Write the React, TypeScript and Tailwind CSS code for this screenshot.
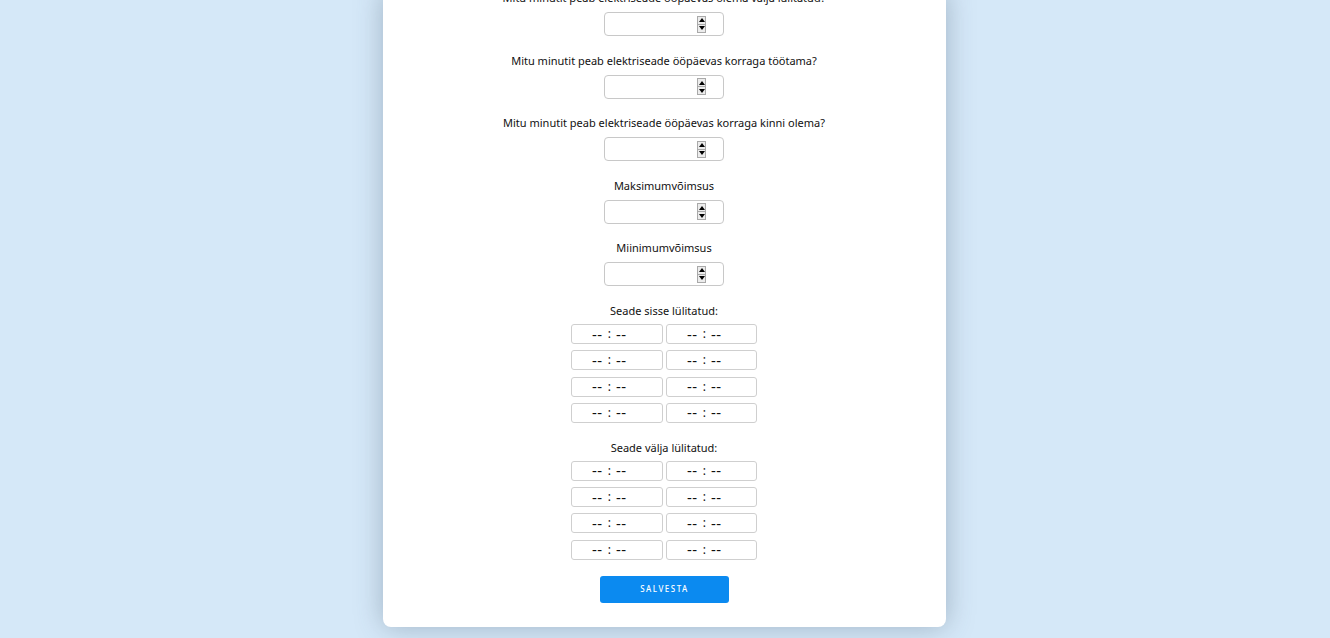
import React from "react";

function Spinner() {
  return (
    <div className="flex flex-col w-[9px] h-[17px] border border-[#a9a9a9] bg-[#ececec]">
      <div className="flex-1 flex items-center justify-center border-b border-[#a9a9a9]">
        <div className="w-0 h-0 border-l-[3px] border-r-[3px] border-b-[4px] border-l-transparent border-r-transparent border-b-black" />
      </div>
      <div className="flex-1 flex items-center justify-center">
        <div className="w-0 h-0 border-l-[3px] border-r-[3px] border-t-[4px] border-l-transparent border-r-transparent border-t-black" />
      </div>
    </div>
  );
}

function NumberField({ label }: { label: string }) {
  return (
    <div className="flex flex-col items-center">
      <div className="leading-[14px] h-[14px] whitespace-nowrap">{label}</div>
      <div className="mt-[7px] w-[120px] h-[24px] border border-[#c8c8c8] rounded-[4px] bg-white flex items-center justify-end pr-[17px]">
        <Spinner />
      </div>
    </div>
  );
}

function TimeField() {
  return (
    <div className="h-[20px] border border-[#cfcfcf] rounded-[3px] bg-white flex items-center pl-[20px] leading-none text-[#111]">
      <span className="text-[15px] tracking-[0.5px]">--</span>
      <span className="text-[12px] px-[5px]">:</span>
      <span className="text-[15px] tracking-[0.5px]">--</span>
    </div>
  );
}

function TimeGroup({ label }: { label: string }) {
  return (
    <div className="flex flex-col items-center pr-[1px]">
      <div className="leading-[14px] h-[14px]">{label}</div>
      <div className="mt-[6px] grid grid-cols-[92px_91px] gap-x-[3px] gap-y-[6.3px]">
        {Array.from({ length: 8 }).map((_, i) => (
          <TimeField key={i} />
        ))}
      </div>
    </div>
  );
}

export default function App() {
  return (
    <div
      className="min-h-[638px] bg-[#d5e8f8] flex justify-center pb-[11px] overflow-hidden"
      style={{ fontFamily: '"Noto Sans", Tahoma, sans-serif' }}
    >
      <div className="-mt-[9px] mr-[1px] w-[563px] bg-white rounded-b-[8px] shadow-[0_0_28px_rgba(60,80,100,0.35)] flex flex-col items-center text-[11px] text-[#111] pb-[23px]">
        <div className="flex flex-col items-center gap-[17.5px] pr-[1px]">
          <NumberField label="Mitu minutit peab elektriseade ööpäevas olema välja lülitatud?" />
          <NumberField label="Mitu minutit peab elektriseade ööpäevas korraga töötama?" />
          <NumberField label="Mitu minutit peab elektriseade ööpäevas korraga kinni olema?" />
          <NumberField label="Maksimumvõimsus" />
          <NumberField label="Miinimumvõimsus" />
        </div>
        <div className="mt-[18px]">
          <TimeGroup label="Seade sisse lülitatud:" />
        </div>
        <div className="mt-[18px]">
          <TimeGroup label="Seade välja lülitatud:" />
        </div>
        <button className="mt-[16px] w-[129px] h-[27px] bg-[#0b8af0] rounded-[3px] text-white text-[8px] tracking-[1.5px] font-medium">
          SALVESTA
        </button>
      </div>
    </div>
  );
}
